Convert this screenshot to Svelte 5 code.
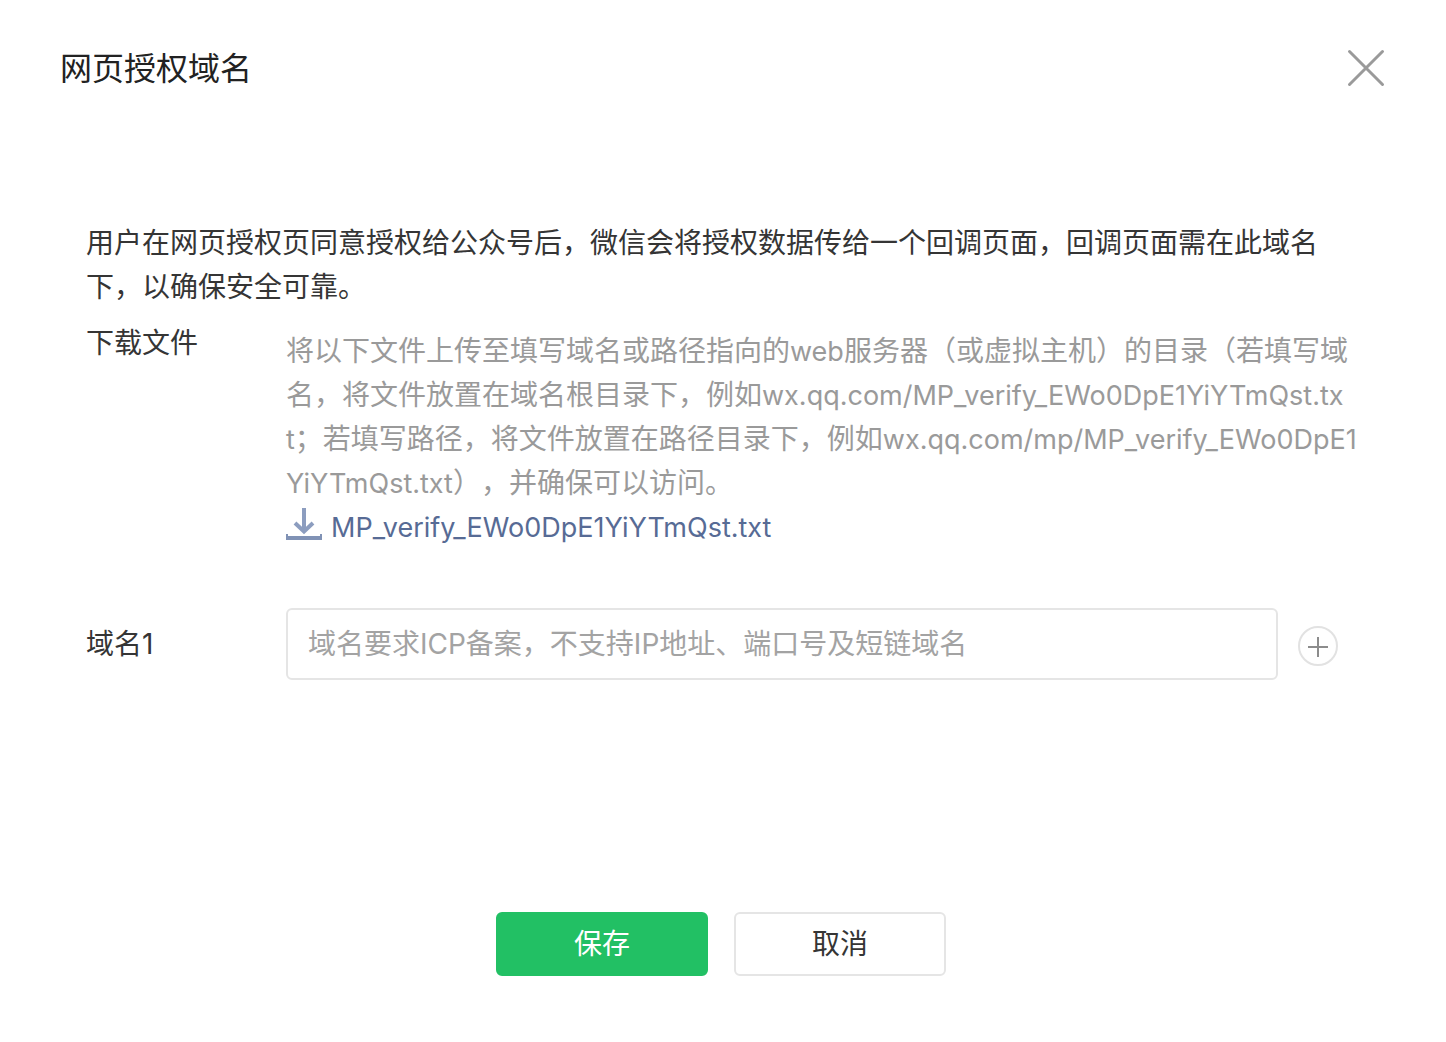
<script>
  const fileName = 'MP_verify_EWo0DpE1YiYTmQst.txt';

  let domains = $state(['']);

  function addDomain() {
    domains.push('');
  }
</script>

<div class="dialog" role="dialog" aria-labelledby="dialog-title">
  <header class="dialog-header">
    <h1 id="dialog-title">网页授权域名</h1>
    <button type="button" class="close" aria-label="关闭">
      <svg viewBox="0 0 40 40" width="40" height="40">
        <path d="M3.5 2.5 36.5 35.5M36.5 2.5 3.5 35.5" />
      </svg>
    </button>
  </header>

  <form class="dialog-body" onsubmit={(e) => e.preventDefault()}>
    <p class="intro">用户在网页授权页同意授权给公众号后，微信会将授权数据传给一个回调页面，回调页面需在此域名下，以确保安全可靠。</p>

    <div class="row">
      <span class="label">下载文件</span>
      <div class="download">
        <p class="tips">将以下文件上传至填写域名或路径指向的<span class="latin">web</span>服务器（或虚拟主机）的目录（若填写域名，将文件放置在域名根目录下，例如<span class="latin">wx.qq.com/{fileName}</span>；若填写路径，将文件放置在路径目录下，例如<span class="latin">wx.qq.com/mp/{fileName}</span>），并确保可以访问。</p>
        <a href="#download" class="file">
          <svg viewBox="0 0 36 38" width="36" height="38" aria-hidden="true">
            <path class="arrow" d="M18 0V24" />
            <path class="arrow" d="M9 15 18 23.5 27 15" />
            <path class="tray" d="M0 26H2V28H34V26H36V32H0Z" />
          </svg>
          <span class="latin">{fileName}</span>
        </a>
      </div>
    </div>

    {#each domains as _, i}
      <div class="row domain-row">
        <label class="label" for="domain-{i}">域名{i + 1}</label>
        <input
          id="domain-{i}"
          type="text"
          placeholder="域名要求ICP备案，不支持IP地址、端口号及短链域名"
          bind:value={domains[i]}
        />
        <button type="button" class="add" aria-label="添加域名" onclick={addDomain}>
          <svg viewBox="0 0 40 40" width="40" height="40">
            <circle cx="20" cy="20" r="19" />
            <path d="M10 21H30M20 11V31" />
          </svg>
        </button>
      </div>
    {/each}

    <footer class="actions">
      <button type="submit" class="btn primary">保存</button>
      <button type="button" class="btn">取消</button>
    </footer>
  </form>
</div>

<style>
  :global(body) {
    background: #fff;
  }

  .dialog {
    box-sizing: border-box;
    padding: 47px 60px 66px;
    background: #fff;
    color: #353535;
    font-family: Inter, 'Noto Sans CJK SC', sans-serif;
    font-size: 28px;
    font-weight: 400;
    line-height: 44px;
    text-spacing-trim: space-all;
  }

  button,
  input {
    font: inherit;
    color: inherit;
  }

  button {
    padding: 0;
    border: 0;
    background: none;
    cursor: pointer;
  }

  svg {
    display: block;
    fill: none;
  }

  .dialog-header {
    display: flex;
    justify-content: space-between;
    align-items: center;
  }

  h1 {
    margin: 0;
    color: #222;
    font-size: 32px;
    font-weight: 400;
    line-height: 44px;
  }

  .close svg {
    stroke: #9a9a9a;
    stroke-width: 3;
    stroke-linecap: round;
  }

  .dialog-body {
    padding: 130px 26px 0;
  }

  p {
    margin: 0;
  }

  .row {
    display: flex;
    align-items: flex-start;
    margin-top: 12px;
  }

  .label {
    flex: none;
    width: 200px;
  }

  .download {
    flex: 1;
    min-width: 0;
    padding-top: 8px;
  }

  .tips {
    color: #9a9a9a;
    word-break: break-all;
  }

  /* Inter runs wide next to the Chinese text */
  .latin {
    font-size: 27px;
    line-height: 1;
  }

  .file {
    display: flex;
    align-items: center;
    gap: 9px;
    width: fit-content;
    height: 44px;
    color: #576b95;
    text-decoration: none;
  }

  .arrow {
    stroke: #8c9dbf;
    stroke-width: 4;
  }

  .tray {
    fill: #8092b5;
  }

  .domain-row {
    align-items: center;
    margin-top: 59px;
  }

  input {
    flex: 1;
    box-sizing: border-box;
    min-width: 0;
    height: 72px;
    padding: 0 20px;
    border: 2px solid #e5e5e5;
    border-radius: 6px;
    background: #fff;
  }

  input::placeholder {
    color: #a3a3a3;
    opacity: 1;
  }

  .add {
    margin: 4px 22px 0 20px;
  }

  .add circle {
    stroke: #e2e2e2;
    stroke-width: 2;
  }

  .add path {
    stroke: #8c8c8c;
    stroke-width: 2;
  }

  .actions {
    display: flex;
    justify-content: center;
    gap: 26px;
    padding: 232px 4px 0 0;
  }

  .btn {
    box-sizing: border-box;
    width: 212px;
    height: 64px;
    border: 2px solid #e5e5e5;
    border-radius: 6px;
    background: #fff;
  }

  .primary {
    border-color: #22c064;
    background: #22c064;
    color: #fff;
  }
</style>
